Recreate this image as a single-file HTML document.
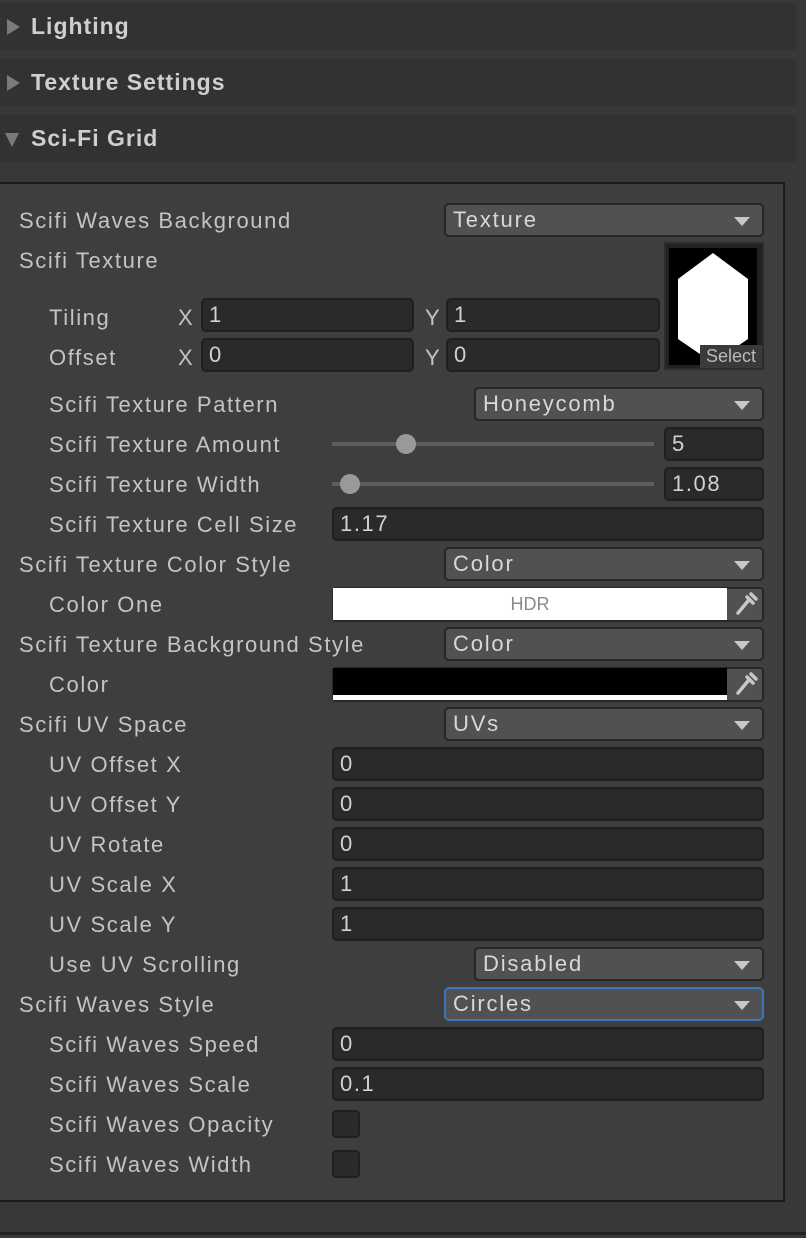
<!DOCTYPE html>
<html><head><style>
body{margin:0;width:806px;height:1238px;background:#383838;font-family:"Liberation Sans",sans-serif;overflow:hidden;position:relative;color:#c4c4c4}
.a{position:absolute;box-sizing:border-box}
.hdr{position:absolute;left:0;width:796px;height:47px;background:#323232;font-weight:bold;font-size:23px;color:#cfcfcf;line-height:47px;padding-left:31px;box-sizing:border-box;letter-spacing:1px}
.tri{position:absolute;left:7px;top:16px;width:0;height:0}
.l{position:absolute;font-size:22px;color:#c4c4c4;line-height:26px;white-space:nowrap;letter-spacing:1.6px}
.dd{position:absolute;height:34px;background:#515151;border:2px solid #262626;border-radius:5px;box-sizing:border-box;font-size:22px;color:#d8d8d8;line-height:30px;padding-left:7px;letter-spacing:1.8px}
.dd:after{content:"";position:absolute;right:12px;top:12px;border-left:8px solid transparent;border-right:8px solid transparent;border-top:9px solid #c8c8c8}
.tf{position:absolute;height:34px;background:#2a2a2a;border:2px solid #1f1f1f;border-radius:5px;box-sizing:border-box;font-size:22px;color:#d2d2d2;line-height:30px;padding-left:6px;letter-spacing:1.6px}
.tr{position:absolute;height:4px;background:#5e5e5e;left:332px;width:322px}
.kn{position:absolute;width:20px;height:20px;border-radius:50%;background:#999}
.cb{position:absolute;left:332px;width:28px;height:28px;background:#2a2a2a;border:2px solid #1f1f1f;border-radius:4px;box-sizing:border-box}
</style></head><body>
<div class="hdr" style="top:3px">Lighting<div class="tri" style="border-top:8px solid transparent;border-bottom:8px solid transparent;border-left:13px solid #7a7a7a"></div></div>
<div class="hdr" style="top:59px">Texture Settings<div class="tri" style="border-top:8px solid transparent;border-bottom:8px solid transparent;border-left:13px solid #7a7a7a"></div></div>
<div class="hdr" style="top:115px">Sci-Fi Grid<div class="tri" style="left:5px;top:18px;border-left:7px solid transparent;border-right:7px solid transparent;border-top:14px solid #7a7a7a"></div></div>

<div class="a" style="left:-2px;top:182px;width:787px;height:1020px;background:#3e3e3e;border:2px solid #1c1c1c"></div>
<div class="a" style="left:0;top:1232px;width:806px;height:3px;background:#222"></div>

<div class="l" style="left:19px;top:208px">Scifi Waves Background</div>
<div class="dd" style="left:444px;top:203px;width:320px">Texture</div>
<div class="l" style="left:19px;top:248px">Scifi Texture</div>
<div class="a" style="left:664px;top:242px;width:100px;height:128px;background:#222;border:2px solid #2c2c2c"></div>
<div class="a" style="left:669px;top:248px;width:88px;height:117px;background:#000"></div>
<svg class="a" style="left:669px;top:248px" width="88" height="117"><polygon points="44,5 79,31 79,91 44,115 9,91 9,31" fill="#fff"/></svg>
<div class="a" style="left:700px;top:345px;width:62px;height:23px;background:#3a3a3a;font-size:18px;line-height:23px;color:#bbb;text-align:center">Select</div>

<div class="l" style="left:49px;top:305px">Tiling</div>
<div class="l" style="left:178px;top:305px">X</div>
<div class="tf" style="left:201px;top:298px;width:213px">1</div>
<div class="l" style="left:425px;top:305px">Y</div>
<div class="tf" style="left:446px;top:298px;width:214px">1</div>
<div class="l" style="left:49px;top:345px">Offset</div>
<div class="l" style="left:178px;top:345px">X</div>
<div class="tf" style="left:201px;top:338px;width:213px">0</div>
<div class="l" style="left:425px;top:345px">Y</div>
<div class="tf" style="left:446px;top:338px;width:214px">0</div>

<div class="l" style="left:49px;top:392px">Scifi Texture Pattern</div>
<div class="dd" style="left:474px;top:387px;width:290px">Honeycomb</div>
<div class="l" style="left:49px;top:432px">Scifi Texture Amount</div>
<div class="tr" style="top:442px"></div><div class="kn" style="left:396px;top:434px"></div>
<div class="tf" style="left:664px;top:427px;width:100px">5</div>
<div class="l" style="left:49px;top:472px">Scifi Texture Width</div>
<div class="tr" style="top:482px"></div><div class="kn" style="left:340px;top:474px"></div>
<div class="tf" style="left:664px;top:467px;width:100px">1.08</div>
<div class="l" style="left:49px;top:512px">Scifi Texture Cell Size</div>
<div class="tf" style="left:332px;top:507px;width:432px">1.17</div>
<div class="l" style="left:19px;top:552px">Scifi Texture Color Style</div>
<div class="dd" style="left:444px;top:547px;width:320px">Color</div>
<div class="l" style="left:49px;top:592px">Color One</div>
<div class="a" style="left:332px;top:587px;width:432px;height:35px;background:#515151;border:2px solid #262626;border-radius:4px"></div>
<div class="a" style="left:333px;top:588px;width:394px;height:32px;background:#fff;font-size:18px;color:#8a8a8a;text-align:center;line-height:32px">HDR</div>
<div class="l" style="left:19px;top:632px">Scifi Texture Background Style</div>
<div class="dd" style="left:444px;top:627px;width:320px">Color</div>
<div class="l" style="left:49px;top:672px">Color</div>
<div class="a" style="left:332px;top:667px;width:432px;height:35px;background:#515151;border:2px solid #262626;border-radius:4px"></div>
<div class="a" style="left:333px;top:668px;width:394px;height:27px;background:#000"></div>
<div class="a" style="left:333px;top:695px;width:394px;height:5px;background:#fff"></div>
<svg class="a" style="left:734px;top:590px" width="24" height="28"><path d="M4 23 L14 11 M17 4 L22 9 M13 7 L19 13" stroke="#c8c8c8" stroke-width="3.5" stroke-linecap="round" fill="none"/></svg>
<svg class="a" style="left:734px;top:670px" width="24" height="28"><path d="M4 23 L14 11 M17 4 L22 9 M13 7 L19 13" stroke="#c8c8c8" stroke-width="3.5" stroke-linecap="round" fill="none"/></svg>

<div class="l" style="left:19px;top:712px">Scifi UV Space</div>
<div class="dd" style="left:444px;top:707px;width:320px">UVs</div>
<div class="l" style="left:49px;top:752px">UV Offset X</div>
<div class="tf" style="left:332px;top:747px;width:432px">0</div>
<div class="l" style="left:49px;top:792px">UV Offset Y</div>
<div class="tf" style="left:332px;top:787px;width:432px">0</div>
<div class="l" style="left:49px;top:832px">UV Rotate</div>
<div class="tf" style="left:332px;top:827px;width:432px">0</div>
<div class="l" style="left:49px;top:872px">UV Scale X</div>
<div class="tf" style="left:332px;top:867px;width:432px">1</div>
<div class="l" style="left:49px;top:912px">UV Scale Y</div>
<div class="tf" style="left:332px;top:907px;width:432px">1</div>
<div class="l" style="left:49px;top:952px">Use UV Scrolling</div>
<div class="dd" style="left:474px;top:947px;width:290px">Disabled</div>
<div class="l" style="left:19px;top:992px">Scifi Waves Style</div>
<div class="dd" style="left:444px;top:987px;width:320px;border-color:#3a79bb">Circles</div>
<div class="l" style="left:49px;top:1032px">Scifi Waves Speed</div>
<div class="tf" style="left:332px;top:1027px;width:432px">0</div>
<div class="l" style="left:49px;top:1072px">Scifi Waves Scale</div>
<div class="tf" style="left:332px;top:1067px;width:432px">0.1</div>
<div class="l" style="left:49px;top:1112px">Scifi Waves Opacity</div>
<div class="cb" style="top:1110px"></div>
<div class="l" style="left:49px;top:1152px">Scifi Waves Width</div>
<div class="cb" style="top:1150px"></div>
</body></html>
